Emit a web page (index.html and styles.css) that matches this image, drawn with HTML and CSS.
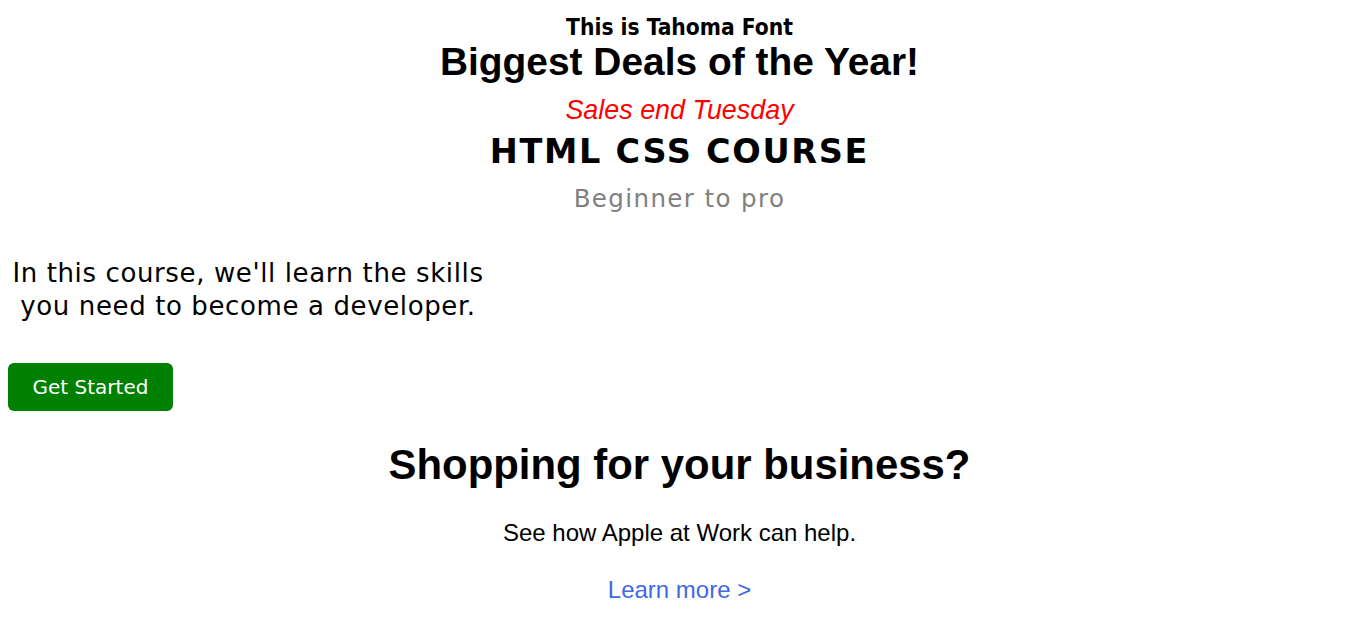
FILE: index.html
```html
<!DOCTYPE html>
<html lang="en">
<head>
<meta charset="utf-8">
<title>Deals</title>
<link rel="stylesheet" href="styles.css">
</head>
<body>
  <p class="tahoma">This is Tahoma Font</p>
  <p class="deals">Biggest Deals of the Year!</p>
  <p class="sales">Sales end Tuesday</p>
  <p class="course-title">HTML CSS COURSE</p>
  <p class="course-sub">Beginner to pro</p>
  <p class="course-desc">In this course, we'll learn the skills you need to become a developer.</p>
  <button class="start-btn">Get Started</button>
  <p class="shop-title">Shopping for your business?</p>
  <p class="shop-desc">See how Apple at Work can help.</p>
  <p class="shop-link">Learn more &gt;</p>
</body>
</html>
```
FILE: styles.css
```css
html, body {
  margin: 0;
  padding: 0;
  background: #ffffff;
}
body {
  padding: 0 8px;
  color: #000000;
  font-family: "Liberation Sans", Arial, sans-serif;
}
p {
  margin: 0;
}
.tahoma {
  margin-top: 14px;
  text-align: center;
  font-family: "DejaVu Sans Condensed", "DejaVu Sans", sans-serif;
  font-weight: bold;
  font-size: 22.6px;
  line-height: 26px;
}
.deals {
  text-align: center;
  font-family: "Liberation Sans", Arial, sans-serif;
  font-weight: bold;
  font-size: 38.9px;
  line-height: 44px;
}
.sales {
  margin-top: 11px;
  text-align: center;
  font-family: "Liberation Sans", Arial, sans-serif;
  font-style: italic;
  color: #ff0000;
  font-size: 26.9px;
  line-height: 31px;
}
.course-title {
  margin-top: 7px;
  text-align: center;
  font-family: "DejaVu Sans", Verdana, sans-serif;
  font-weight: bold;
  font-size: 33.5px;
  letter-spacing: 1.7px;
  line-height: 38px;
}
.course-sub {
  margin-top: 13px;
  text-align: center;
  font-family: "DejaVu Sans", Verdana, sans-serif;
  color: #808080;
  font-size: 24.5px;
  letter-spacing: 1.4px;
  line-height: 29px;
}
.course-desc {
  margin-top: 44px;
  width: 480px;
  text-align: center;
  font-family: "DejaVu Sans", Verdana, sans-serif;
  font-size: 26px;
  letter-spacing: 0.62px;
  line-height: 33px;
}
.start-btn {
  display: block;
  margin-top: 40px;
  width: 165px;
  height: 48px;
  padding: 0;
  border: none;
  border-radius: 6px;
  background: #008000;
  color: #ffffff;
  font-family: "DejaVu Sans", Verdana, sans-serif;
  font-size: 20px;
  line-height: 48px;
  cursor: pointer;
}
.shop-title {
  margin-top: 30px;
  text-align: center;
  font-family: "Liberation Sans", Arial, sans-serif;
  font-weight: bold;
  font-size: 41.9px;
  line-height: 48px;
}
.shop-desc {
  margin-top: 30px;
  text-align: center;
  font-size: 24px;
  line-height: 28px;
}
.shop-link {
  margin-top: 29px;
  text-align: center;
  color: #4169e1;
  font-size: 24px;
  line-height: 28px;
}
```
